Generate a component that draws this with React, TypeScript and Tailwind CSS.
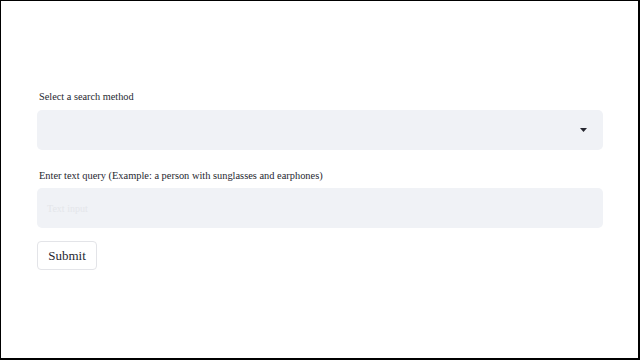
export default function App() {
  return (
    <div
      className="w-[640px] h-[360px] bg-white border-black border-l border-t border-r-2 border-b-2 text-[#262730]"
      style={{ fontFamily: "'Liberation Serif', 'Times New Roman', Times, serif" }}
    >
      <div className="pl-[36px] pr-[35px] pt-[88px] flex flex-col">
        <label className="text-[10.3px] leading-[16px] pl-[2px]">Select a search method</label>
        <div className="mt-[5px] h-[40px] rounded-[5px] bg-[#f0f2f6] flex items-center justify-end pr-[16px]">
          <svg width="7" height="4" viewBox="0 0 7 4">
            <path d="M0 0 L7 0 L3.5 4 Z" fill="#262730" />
          </svg>
        </div>
        <label className="mt-[18px] text-[10.4px] leading-[16px] pl-[2px]">
          Enter text query (Example: a person with sunglasses and earphones)
        </label>
        <div className="mt-[4px] h-[40px] rounded-[5px] bg-[#f0f2f6] flex items-center pl-[10px]">
          <span className="text-[10px] text-[#e4e6ea]">Text input</span>
        </div>
        <div className="mt-[13px]">
          <button
            className="h-[29px] w-[60px] rounded-[4px] border border-[#e3e4e8] bg-white text-[13px]"
            style={{ fontFamily: "'Liberation Serif', 'Times New Roman', Times, serif" }}
          >
            Submit
          </button>
        </div>
      </div>
    </div>
  );
}
